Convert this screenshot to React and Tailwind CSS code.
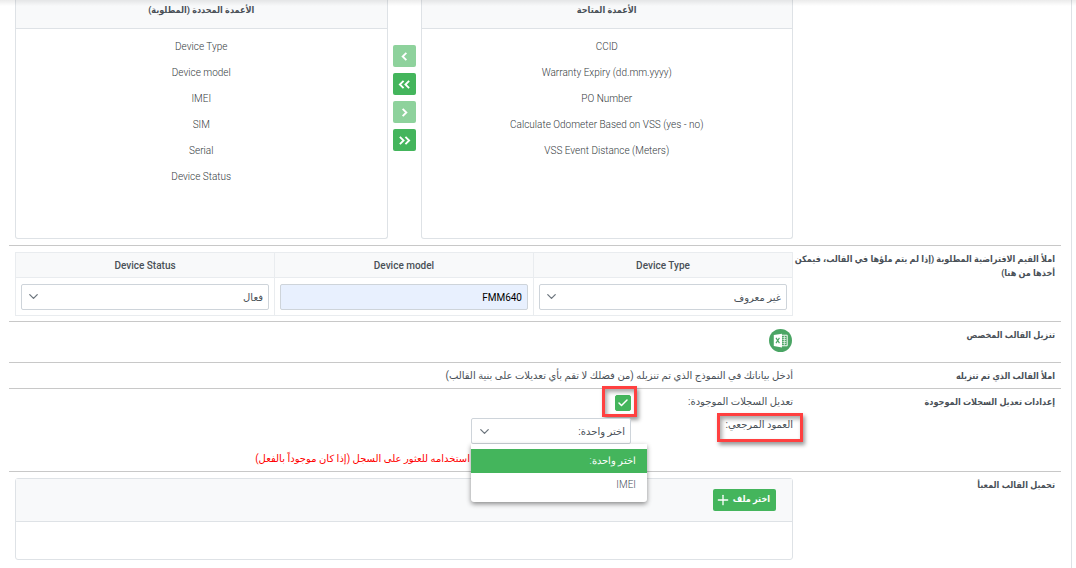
import { useState } from 'react';
import { Check, ChevronDown, Plus } from 'lucide-react';

const availableColumns = [
  'CCID',
  'Warranty Expiry (dd.mm.yyyy)',
  'PO Number',
  'Calculate Odometer Based on VSS (yes - no)',
  'VSS Event Distance (Meters)',
];

const selectedColumns = ['Device Type', 'Device model', 'IMEI', 'SIM', 'Serial', 'Device Status'];

const moveButtons = [
  { label: 'نقل المحدد إلى اليسار', paths: ['M9 3 5 7l4 4'], disabled: true },
  { label: 'نقل الكل إلى اليسار', paths: ['M6 3 2 7l4 4', 'M12 3 8 7l4 4'], disabled: false },
  { label: 'نقل المحدد إلى اليمين', paths: ['M5 3l4 4-4 4'], disabled: true },
  { label: 'نقل الكل إلى اليمين', paths: ['M2 3l4 4-4 4', 'M8 3l4 4-4 4'], disabled: false },
];

const Row = ({ label, children }) => (
  <section className="flex border-b border-[#c8c8c8] pt-[6px] pb-[5px] last:border-b-0">
    <h2 className="w-[calc(25%+5px)] shrink-0 pr-[6px] font-['Roboto','DejaVu_Sans_Condensed',sans-serif] text-[9px] leading-[14px] font-bold text-[#495057]">
      {label}
    </h2>
    <div className="min-w-0 flex-1 pl-[6px]">{children}</div>
  </section>
);

const ColumnBox = ({ title, items }) => (
  <div className="h-[239px] min-w-0 flex-1 rounded-b-[3px] border border-t-0 border-[#dee2e6] text-center">
    <h3 className="h-[29px] border-b border-[#dee2e6] bg-[#f8f9fa] font-['Roboto','DejaVu_Sans_Condensed',sans-serif] text-[9px] leading-5 font-bold text-[#495057]">
      {title}
    </h3>
    <ul className="pt-[5px] font-light text-[#343a40]" dir="ltr">
      {items.map((item) => (
        <li key={item} className="text-[10px] leading-[26px]">{item}</li>
      ))}
    </ul>
  </div>
);

const SelectBox = ({ label, options }) => (
  <div className="relative">
    <select
      aria-label={label}
      className="block h-[26px] w-full appearance-none rounded-[2px] border border-[#ced4da] bg-white pr-[5px] pl-7 text-[10px] text-[#495057] outline-none"
    >
      {options.map((option) => (
        <option key={option}>{option}</option>
      ))}
    </select>
    <ChevronDown className="pointer-events-none absolute top-[5px] left-[5px] size-[15px] text-[#6c757d]" strokeWidth={2} />
  </div>
);

const ExcelIcon = () => (
  <svg viewBox="0 0 24 24" className="size-[23px]">
    <circle cx="12" cy="12" r="12" fill="#4aa564" />
    <path d="M13 6.5h6v11h-6z" fill="#4aa564" stroke="#fff" strokeWidth="1" />
    <path d="M14 9h4M14 11h4M14 13h4M14 15h4M16 7v10" stroke="#fff" strokeWidth="0.7" />
    <path d="M5 6.2 13.5 5v14.2L5 17.8z" fill="#fff" />
    <path d="m7.3 9.3 3.6 5.4M10.9 9.3l-3.6 5.4" stroke="#4aa564" strokeWidth="1.2" />
  </svg>
);

const App = () => {
  const [editExisting, setEditExisting] = useState(true);
  const [menuOpen, setMenuOpen] = useState(true);
  const [reference, setReference] = useState('اختر واحدة:');

  return (
    <main dir="rtl" className="relative bg-white pr-1 font-['Roboto','DejaVu_Sans',sans-serif] text-[10px] text-[#495057]">
      {/* Shadow of the fixed top bar */}
      <div className="pointer-events-none absolute inset-x-0 top-0 z-10 h-[6px] bg-linear-to-b from-black/8 to-transparent" />

      <div className="min-h-screen border-r border-[#dee2e6] pr-[10px] pl-[9px]">
        <section className="flex border-b border-[#c8c8c8] pb-[6px]">
          <div className="w-[calc(25%+5px)] shrink-0" />
          <div className="flex min-w-0 flex-1 pl-[6px]">
            <ColumnBox title="الأعمدة المتاحة" items={availableColumns} />
            <div className="flex w-[33px] flex-col items-center gap-[6px] pt-[45px]" dir="ltr">
              {moveButtons.map(({ label, paths, disabled }) => (
                <button
                  key={label}
                  aria-label={label}
                  disabled={disabled}
                  className="flex h-[22px] w-[23px] items-center justify-center rounded-[2px] bg-[#44b55c] text-white disabled:opacity-60"
                >
                  <svg viewBox="0 0 14 14" className="size-[13px]" fill="none" stroke="currentColor" strokeWidth="2">
                    {paths.map((d) => <path key={d} d={d} />)}
                  </svg>
                </button>
              ))}
            </div>
            <ColumnBox title="الأعمدة المحددة (المطلوبة)" items={selectedColumns} />
          </div>
        </section>

        <Row label="املأ القيم الافتراضية المطلوبة (إذا لم يتم ملؤها في القالب، فيمكن أخذها من هنا)">
          <table className="w-full table-fixed border-collapse">
            <thead>
              <tr className="h-[25px] bg-[#f8f9fa]">
                <th className="border border-[#e9ecef] pt-[2px] text-[10px] leading-4 font-medium">Device Type</th>
                <th className="border border-[#e9ecef] pt-[2px] text-[10px] leading-4 font-medium">Device model</th>
                <th className="border border-[#e9ecef] pt-[2px] text-[10px] leading-4 font-medium">Device Status</th>
              </tr>
            </thead>
            <tbody>
              <tr>
                <td className="border border-[#e9ecef] px-[5px] pt-[6px] pb-[5px]">
                  <SelectBox label="Device Type" options={['غير معروف']} />
                </td>
                <td className="border border-[#e9ecef] px-[5px] pt-[6px] pb-[5px]">
                  <input
                    aria-label="Device model"
                    defaultValue="FMM640"
                    className="block h-[26px] w-full rounded-[2px] border border-[#ced4da] bg-[#e8f0fe] px-[5px] text-[10px] text-black outline-none"
                  />
                </td>
                <td className="border border-[#e9ecef] px-[5px] pt-[6px] pb-[5px]">
                  <SelectBox label="Device Status" options={['فعال']} />
                </td>
              </tr>
            </tbody>
          </table>
        </Row>

        <Row label="تنزيل القالب المخصص">
          <div className="h-[29px]">
            <button aria-label="تنزيل القالب المخصص" className="block p-px">
              <ExcelIcon />
            </button>
          </div>
        </Row>

        <Row label="املأ القالب الذي تم تنزيله">
          <p className="leading-[14px]">
            أدخل بياناتك في النموذج الذي تم تنزيله (من فضلك لا تقم بأي تعديلات على بنية القالب)
          </p>
        </Row>

        <Row label="إعدادات تعديل السجلات الموجودة">
          <div className="flex flex-col gap-[7px]">
            <div className="flex h-4">
              <label htmlFor="edit-existing" className="w-[162px] shrink-0 leading-[14px]">تعديل السجلات الموجودة:</label>
              <div className="relative size-4">
                <input
                  id="edit-existing"
                  type="checkbox"
                  checked={editExisting}
                  onChange={(e) => setEditExisting(e.target.checked)}
                  className="block size-4 appearance-none rounded-[2px] border border-[#44b55c] checked:bg-[#44b55c]"
                />
                {editExisting && (
                  <Check className="pointer-events-none absolute top-[2px] left-[2px] size-3 text-white" strokeWidth={3} />
                )}
                <span className="pointer-events-none absolute -top-[9px] -left-[13px] h-[31px] w-[35px] border-[3px] border-[#ff4040] shadow-[2px_3px_4px_rgba(0,0,0,0.4),inset_2px_3px_4px_rgba(0,0,0,0.35)]" />
              </div>
            </div>

            <div className="flex">
              <div className="relative w-[162px] shrink-0">
                <label htmlFor="reference-column" className="block leading-[14px]">العمود المرجعي:</label>
                <span className="pointer-events-none absolute -top-[5px] -right-[10px] h-[29px] w-[86px] border-[3px] border-[#ff4040] shadow-[2px_3px_4px_rgba(0,0,0,0.4),inset_2px_3px_4px_rgba(0,0,0,0.35)]" />
              </div>
              <div className="relative w-[160px]">
                <button
                  id="reference-column"
                  aria-haspopup="listbox"
                  aria-expanded={menuOpen}
                  onClick={() => setMenuOpen(!menuOpen)}
                  className="flex h-[26px] w-full items-center justify-between rounded-[2px] border border-[#ced4da] bg-white px-[5px]"
                >
                  {reference}
                  <ChevronDown className="size-[15px] text-[#6c757d]" />
                </button>
                {menuOpen && (
                  <ul
                    role="listbox"
                    className="absolute top-full left-0 z-10 w-44 rounded-b-[3px] bg-white py-[5px] shadow-[0_2px_5px_rgba(0,0,0,0.45)]"
                  >
                    {['اختر واحدة:', 'IMEI'].map((option) => (
                      <li
                        key={option}
                        role="option"
                        aria-selected={option === reference}
                        onClick={() => setReference(option)}
                        className="h-6 px-[11px] leading-6 font-light aria-selected:bg-[#44b55c] aria-selected:text-white"
                      >
                        {option}
                      </li>
                    ))}
                  </ul>
                )}
              </div>
            </div>

            <p className="pt-px pr-[323px] leading-[14px] whitespace-nowrap text-[#ff0000]">
              استخدامه للعثور على السجل (إذا كان موجوداً بالفعل)
            </p>
          </div>
        </Row>

        <Row label="تحميل القالب المعبأ">
          <div className="rounded-[3px] border border-[#dee2e6]">
            <div className="border-b border-[#dee2e6] bg-[#f8f9fa] px-4 py-[10px]">
              <button className="flex h-[22px] items-center gap-[2px] rounded-[2px] bg-[#44b55c] pr-[6px] pl-[2px] font-['Roboto','DejaVu_Sans_Condensed',sans-serif] text-[9px] font-bold text-white">
                اختر ملف
                <Plus className="size-4" />
              </button>
            </div>
            <div className="h-[37px]" />
          </div>
        </Row>
      </div>
    </main>
  );
};

export default App;
